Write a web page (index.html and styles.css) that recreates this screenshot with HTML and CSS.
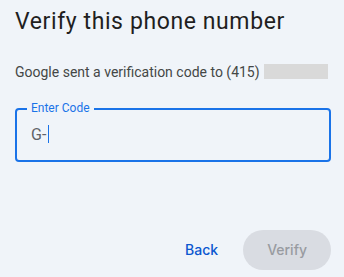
FILE: index.html
```html
<!DOCTYPE html>
<html lang="en">
<head>
<meta charset="utf-8">
<title>Verify this phone number</title>
<link rel="stylesheet" href="styles.css">
</head>
<body>
<main class="page">
  <h1 class="title">Verify this phone number</h1>
  <p class="desc">Google sent a verification code to (415)<span class="redact"></span></p>
  <div class="field">
    <span class="field-label">Enter Code</span>
    <div class="field-value">G-<span class="caret"></span></div>
  </div>
  <div class="actions">
    <button class="btn-text" type="button">Back</button>
    <button class="btn-filled" type="button" disabled>Verify</button>
  </div>
</main>
</body>
</html>
```
FILE: styles.css
```css
html, body {
  margin: 0;
  padding: 0;
  background: #f0f4f9;
}
.page {
  padding: 0 13px 0 15px;
  font-family: Roboto, "Liberation Sans", sans-serif;
}
.title {
  margin: 8px 0 0 0;
  font-size: 23px;
  line-height: 28px;
  font-weight: 400;
  letter-spacing: 0.6px;
  color: #1f1f1f;
}
.desc {
  margin: 25.5px 0 0 0;
  font-size: 14px;
  line-height: 20px;
  color: #444746;
}
.redact {
  display: inline-block;
  width: 64px;
  height: 15px;
  margin-left: 4px;
  vertical-align: -2px;
  background: #d9d9d9;
}
.field {
  position: relative;
  margin-top: 26px;
  height: 50px;
  border: 2px solid #1a73e8;
  border-radius: 4px;
  box-sizing: content-box;
}
.field-label {
  position: absolute;
  left: 10px;
  top: -10px;
  padding: 0 4px;
  background: #f0f4f9;
  font-size: 12px;
  line-height: 16px;
  color: #1a73e8;
}
.field-value {
  padding: 13px 14px;
  font-size: 16px;
  line-height: 24px;
  color: #5f6368;
}
.caret {
  display: inline-block;
  width: 1px;
  height: 18px;
  margin-left: 2px;
  vertical-align: -3px;
  background: #1a73e8;
}
.actions {
  display: flex;
  justify-content: flex-end;
  align-items: center;
  gap: 12px;
  margin-top: 68px;
}
.btn-text, .btn-filled {
  height: 40px;
  border: none;
  border-radius: 20px;
  font-family: Inter, Roboto, sans-serif;
  font-size: 14px;
  font-weight: 500;
  cursor: pointer;
}
.btn-text {
  padding: 0 12px;
  margin-right: 1px;
  background: transparent;
  color: #0b57d0;
}
.btn-filled {
  padding: 0 24px;
  background: #d9dce2;
  color: #989ba0;
}
```
